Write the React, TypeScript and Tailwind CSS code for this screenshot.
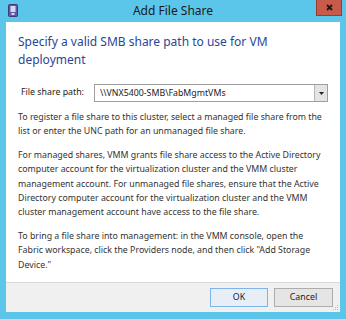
export default function App() {
  const font = { fontFamily: '"Noto Sans", "Open Sans", sans-serif' };

  return (
    <div
      className="w-[346px] h-[319px] bg-[#5cc5ea] flex flex-col overflow-hidden"
      style={font}
    >
      {/* title bar */}
      <div className="h-[22px] grid grid-cols-[1fr_auto_1fr] items-start">
        <div className="pl-[8px] pt-[4px]">
          <svg width="10" height="13" viewBox="0 0 10 13">
            <rect x="0.5" y="0.5" width="9" height="12" rx="1" fill="#5a5aa8" stroke="#3b3b7a" />
            <rect x="2.5" y="2" width="5" height="6" fill="#d8d8f0" />
            <rect x="3.5" y="9" width="3" height="2" fill="#d8d8f0" />
          </svg>
        </div>
        <div className="text-[12px] text-[#1a1a1a] leading-[22px]">Add File Share</div>
        <div className="flex justify-end pr-[4px]">
          <div className="w-[26px] h-[16px] bg-[#c75a4a] border border-[#9a3a30] border-t-0 flex items-center justify-center">
            <svg width="7" height="7" viewBox="0 0 7 7">
              <path d="M1 1 L6 6 M6 1 L1 6" stroke="#1a1a1a" strokeWidth="1.8" />
            </svg>
          </div>
        </div>
      </div>

      {/* body */}
      <div className="mx-[6px] mb-[7px] flex-1 bg-white flex flex-col">
        <div className="flex-1 pl-[12px] pr-[4px] pt-[11px] whitespace-nowrap">
          <h1 className="text-[12px] leading-[18px] text-[#2b4696]">
            <span className="block">Specify a valid SMB share path to use for VM</span>
            <span className="block">deployment</span>
          </h1>

          <div className="flex items-center mt-[15px] pl-[3px]">
            <span className="text-[8.8px] text-[#222] w-[73px]">File share path:</span>
            <div className="w-[234px] h-[18px] border border-[#9e9e9e] flex">
              <div className="flex-1 text-[8.8px] text-[#222] leading-[16px] pl-[5px]">
                \\VNX5400-SMB\FabMgmtVMs
              </div>
              <div className="w-[13px] bg-[#e4e4e4] border-l border-[#b5b5b5] flex items-center justify-center">
                <svg width="5" height="3" viewBox="0 0 5 3">
                  <path d="M0 0 L5 0 L2.5 3 Z" fill="#222" />
                </svg>
              </div>
            </div>
          </div>

          <div className="text-[8.8px] leading-[14.4px] text-[#333] mt-[8px]">
            <p>
              <span className="block">To register a file share to this cluster, select a managed file share from the</span>
              <span className="block">list or enter the UNC path for an unmanaged file share.</span>
            </p>
            <p className="mt-[9px]">
              <span className="block">For managed shares, VMM grants file share access to the Active Directory</span>
              <span className="block">computer account for the virtualization cluster and the VMM cluster</span>
              <span className="block">management account. For unmanaged file shares, ensure that the Active</span>
              <span className="block">Directory computer account for the virtualization cluster and the VMM</span>
              <span className="block">cluster management account have access to the file share.</span>
            </p>
            <p className="mt-[9px]">
              <span className="block">To bring a file share into management: in the VMM console, open the</span>
              <span className="block">Fabric workspace, click the Providers node, and then click "Add Storage</span>
              <span className="block">Device."</span>
            </p>
          </div>
        </div>

        {/* footer */}
        <div className="h-[30px] bg-[#f0f0f0] border-t border-[#d9d9d9] flex items-center justify-end gap-[6px] pr-[7px] relative">
          <button className="w-[58px] h-[19px] border border-[#7eb4ea] bg-[#e8eef5] text-[8.8px] text-[#222]">
            OK
          </button>
          <button className="w-[59px] h-[19px] border border-[#adadad] bg-[#e5e5e5] text-[8.8px] text-[#222]">
            Cancel
          </button>
          <svg className="absolute right-[1px] bottom-[1px]" width="6" height="6" viewBox="0 0 6 6">
            <rect x="4" y="0" width="1" height="1" fill="#bbb" />
            <rect x="2" y="2" width="1" height="1" fill="#bbb" />
            <rect x="4" y="2" width="1" height="1" fill="#bbb" />
            <rect x="0" y="4" width="1" height="1" fill="#bbb" />
            <rect x="2" y="4" width="1" height="1" fill="#bbb" />
            <rect x="4" y="4" width="1" height="1" fill="#bbb" />
          </svg>
        </div>
      </div>
    </div>
  );
}
